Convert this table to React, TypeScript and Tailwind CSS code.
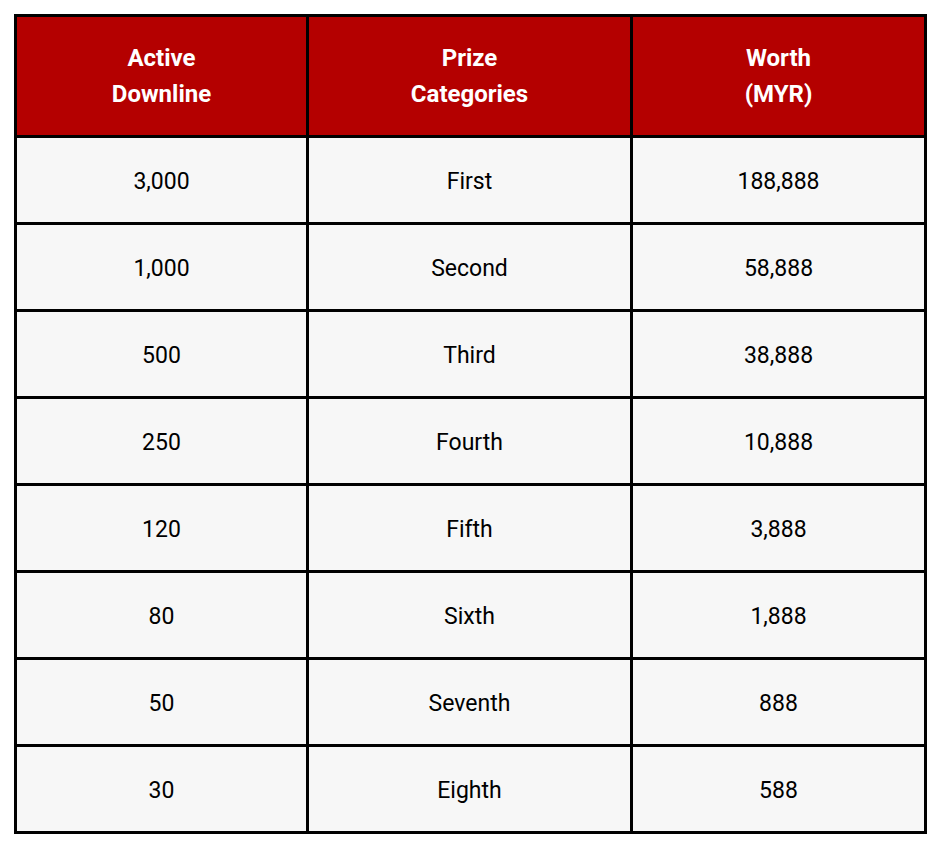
import React from "react";

const rows: [string, string, string][] = [
  ["3,000", "First", "188,888"],
  ["1,000", "Second", "58,888"],
  ["500", "Third", "38,888"],
  ["250", "Fourth", "10,888"],
  ["120", "Fifth", "3,888"],
  ["80", "Sixth", "1,888"],
  ["50", "Seventh", "888"],
  ["30", "Eighth", "588"],
];

const headers: [string, string][] = [
  ["Active", "Downline"],
  ["Prize", "Categories"],
  ["Worth", "(MYR)"],
];

export default function App() {
  return (
    <div
      className="w-[941px] h-[849px] bg-white pt-[14px] pl-[14px]"
      style={{ fontFamily: "Roboto, 'Liberation Sans', sans-serif" }}
    >
      <div className="w-[913px] bg-black p-[3px] grid grid-cols-[289px_321px_291px] grid-rows-[118px_repeat(8,84px)] gap-[3px]">
        {headers.map(([a, b]) => (
          <div
            key={a}
            className="bg-[#b40000] text-white font-bold text-[24px] leading-[36px] flex flex-col items-center justify-center"
          >
            <span>{a}</span>
            <span>{b}</span>
          </div>
        ))}
        {rows.map((r) =>
          r.map((c, i) => (
            <div
              key={r[0] + i}
              className="bg-[#f7f7f7] text-black text-[23px] pt-[4px] flex items-center justify-center"
            >
              {c}
            </div>
          ))
        )}
      </div>
    </div>
  );
}
